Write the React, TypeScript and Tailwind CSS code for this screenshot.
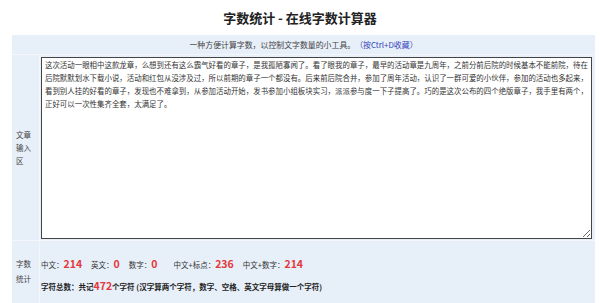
import React from "react";

const font = { fontFamily: '"Noto Sans CJK SC", "Noto Sans", sans-serif' };

const article = [
  "这次活动一眼相中这款龙章，么想到还有这么霸气好看的章子，是我孤陋寡闻了。看了眼我的章子，最早的活动章是九周年，之前分前后院的时候基本不能前院，待在",
  "后院默默划水下载小说，活动和红包从没涉及过，所以前期的章子一个都没有。后来前后院合并，参加了周年活动，认识了一群可爱的小伙伴，参加的活动也多起来，",
  "看到别人挂的好看的章子，发现也不难拿到，从参加活动开始，发书参加小组板块实习，派派参与度一下子提高了。巧的是这次公布的四个绝版章子，我手里有两个，",
  "正好可以一次性集齐全套，太满足了。",
].join("\n");

const Stat = ({ label, value }: { label: string; value: string }) => (
  <span className="flex items-baseline">
    <span className="text-[7.5px] text-[#333]">{label}：</span>
    <span className="text-[10.5px] font-bold text-[#e4393c]">{value}</span>
  </span>
);

const App = () => {
  return (
    <div className="w-[600px] h-[303px] overflow-hidden bg-white" style={font}>
      <div className="h-[35px] flex items-center justify-center">
        <h1 className="text-[13px] font-semibold text-[#222]">字数统计 - 在线字数计算器</h1>
      </div>
      <div className="ml-[12px] w-[583px] bg-[#e7eff9]">
        <div className="h-[20px] flex items-center justify-center border-b border-[#f3f7fc] text-[7.9px] text-[#444]">
          一种方便计算字数，以控制文字数量的小工具。
          <span className="text-[#3344bb]">（按Ctrl+D收藏）</span>
        </div>
        <div className="flex border-b border-[#f3f7fc]">
          <div className="w-[28px] shrink-0 flex items-center border-r border-[#f3f7fc] pl-[4px] text-[7.5px] leading-[13px] text-[#444]">
            <div>
              文章
              <br />
              输入
              <br />
              区
            </div>
          </div>
          <div className="pl-[1px] pr-[2px] pt-[2px] pb-[1px]">
            <textarea
              wrap="off"
              readOnly
              value={article}
              className="block w-[551px] h-[182px] bg-white border border-[#444] px-[3px] py-0 text-[7.45px] leading-[13px] text-[#333] outline-none overflow-hidden"
              style={font}
            />
          </div>
        </div>
        <div className="flex h-[70px]">
          <div className="w-[28px] shrink-0 flex items-center border-r border-[#f3f7fc] pl-[4px] pb-[10px] text-[7.5px] leading-[15px] text-[#444]">
            <div>
              字数
              <br />
              统计
            </div>
          </div>
          <div className="pl-[1px] pt-[15px]">
            <div className="flex items-baseline gap-x-[9px] h-[16px]">
              <Stat label="中文" value="214" />
              <Stat label="英文" value="0" />
              <span className="mr-[7px]">
                <Stat label="数字" value="0" />
              </span>
              <Stat label="中文+标点" value="236" />
              <Stat label="中文+数字" value="214" />
            </div>
            <div className="mt-[6px] flex items-baseline text-[7.5px] font-bold text-[#222]">
              字符总数：共记
              <span className="text-[10.5px] text-[#e4393c]">472</span>
              个字符 (汉字算两个字符，数字、空格、英文字母算做一个字符)
            </div>
          </div>
        </div>
      </div>
    </div>
  );
};

export default App;
